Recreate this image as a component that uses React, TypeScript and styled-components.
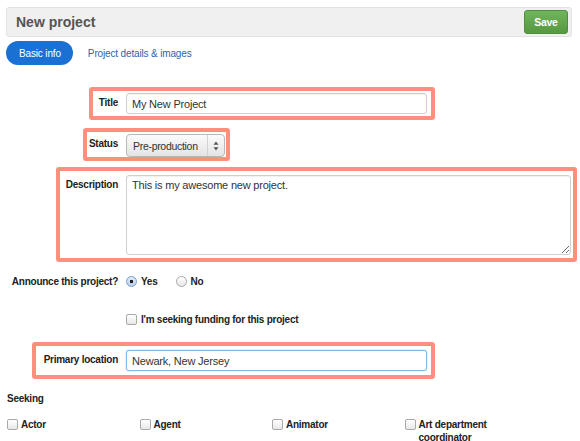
import React from "react";
import styled, { createGlobalStyle } from "styled-components";

const GlobalStyle = createGlobalStyle`
  body {
    margin: 0;
    background: #ffffff;
    font-family: "Liberation Sans", Arial, sans-serif;
    color: #222;
  }
`;

const Page = styled.div`
  width: 580px;
  height: 441px;
  overflow: hidden;
  padding-top: 7px;
  box-sizing: border-box;
`;

const Header = styled.div`
  margin: 0 8px 0 6px;
  height: 30px;
  box-sizing: border-box;
  background: #f0f0f0;
  border: 1px solid #e2e2e2;
  border-radius: 3px;
  display: flex;
  align-items: center;
  justify-content: space-between;
  padding: 0 3px 0 9px;
`;

const HeaderTitle = styled.h1`
  margin: 0;
  font-size: 14px;
  font-weight: bold;
  color: #555;
`;

const SaveButton = styled.button`
  width: 44px;
  height: 24px;
  border: 1px solid #4f8f3f;
  border-radius: 3px;
  background: linear-gradient(#70b45c, #56993f);
  color: #fff;
  font-family: inherit;
  font-size: 10.5px;
  font-weight: bold;
  letter-spacing: -0.3px;
  padding: 0;
`;

const Tabs = styled.div`
  display: flex;
  align-items: center;
  margin: 4px 0 0 6px;
  gap: 15px;
`;

const Tab = styled.a<{ $active?: boolean }>`
  height: 24px;
  display: flex;
  align-items: center;
  font-size: 10px;
  letter-spacing: -0.15px;
  text-decoration: none;
  border-radius: 12px;
  ${(p) =>
    p.$active
      ? `background: #1a71d3; color: #fff; padding: 0 12px 0 13px;`
      : `color: #2b65b3;`}
`;

const FieldRow = styled.div<{ $mt: number }>`
  position: relative;
  display: grid;
  grid-template-columns: 118px 1fr;
  column-gap: 8px;
  align-items: start;
  margin-top: ${(p) => p.$mt}px;
`;

const Label = styled.label<{ $pt?: number }>`
  text-align: right;
  font-size: 10px;
  font-weight: bold;
  letter-spacing: -0.25px;
  color: #222;
  padding-top: ${(p) => p.$pt ?? 4}px;
  white-space: nowrap;
`;

const TextInput = styled.input<{ $w: number; $focus?: boolean }>`
  width: ${(p) => p.$w}px;
  height: 21px;
  box-sizing: border-box;
  border: 1px solid ${(p) => (p.$focus ? "#86b6e8" : "#cfcfcf")};
  border-radius: 3px;
  box-shadow: ${(p) =>
    p.$focus ? "0 0 2px #a9cdf2" : "inset 0 1px 1px rgba(0,0,0,0.06)"};
  padding: 0 5px;
  font-family: inherit;
  font-size: 11px;
  letter-spacing: -0.2px;
  color: #333;
  outline: none;
`;

const SelectBox = styled.div`
  width: 99px;
  height: 23px;
  box-sizing: border-box;
  border: 1px solid #b9b9b9;
  border-radius: 4px;
  background: linear-gradient(#fbfbfb, #e4e4e4);
  display: flex;
  align-items: center;
  font-size: 10.5px;
  letter-spacing: -0.3px;
  color: #333;
`;

const SelectText = styled.span`
  flex: 1;
  padding-left: 6px;
  white-space: nowrap;
  overflow: hidden;
`;

const SelectArrows = styled.span`
  width: 16px;
  flex: none;
  height: 100%;
  border-left: 1px solid #d2d2d2;
  display: flex;
  align-items: center;
  justify-content: center;
`;

const TextArea = styled.textarea`
  width: 445px;
  height: 80px;
  box-sizing: border-box;
  border: 1px solid #d0d0d0;
  border-radius: 3px;
  box-shadow: inset 0 1px 1px rgba(0, 0, 0, 0.06);
  padding: 3px 5px;
  font-family: inherit;
  font-size: 11px;
  letter-spacing: -0.2px;
  color: #333;
  outline: none;
  resize: both;
`;

const Highlight = styled.div<{ $l: number; $t: number; $w: number; $h: number }>`
  position: absolute;
  left: ${(p) => p.$l}px;
  top: ${(p) => p.$t}px;
  width: ${(p) => p.$w}px;
  height: ${(p) => p.$h}px;
  box-sizing: border-box;
  border: 4px solid #fd8f7d;
  border-radius: 3px;
  pointer-events: none;
`;

const Options = styled.div`
  display: flex;
  align-items: center;
`;

const Choice = styled.span<{ $mr?: number }>`
  display: flex;
  align-items: center;
  gap: 4px;
  font-size: 10px;
  font-weight: bold;
  letter-spacing: -0.25px;
  margin-right: ${(p) => p.$mr ?? 0}px;
`;

const Radio = styled.span<{ $checked?: boolean }>`
  width: 11px;
  height: 11px;
  box-sizing: border-box;
  border-radius: 50%;
  border: 1px solid ${(p) => (p.$checked ? "#7d9cc4" : "#a9a9a9")};
  background: ${(p) =>
    p.$checked
      ? "radial-gradient(circle, #222 0 1.6px, transparent 2px), linear-gradient(#dfeaf8, #b9cfee)"
      : "linear-gradient(#ffffff, #e6e6e6)"};
  flex: none;
`;

const Box = styled.span`
  width: 11px;
  height: 11px;
  box-sizing: border-box;
  border-radius: 2px;
  border: 1px solid #aaa;
  background: linear-gradient(#ffffff, #e8e8e8);
  flex: none;
`;

const Heading = styled.div`
  margin: 22px 0 0 7px;
  font-size: 10px;
  font-weight: bold;
  letter-spacing: -0.25px;
`;

const CheckGrid = styled.div`
  display: grid;
  grid-template-columns: repeat(4, 132.5px);
  margin: 14px 0 0 7px;
`;

const CheckItem = styled.div`
  display: flex;
  align-items: flex-start;
  gap: 3px;
  font-size: 10px;
  font-weight: bold;
  letter-spacing: -0.25px;
  line-height: 13px;
  padding-right: 12px;
  ${Box} {
    margin-top: 1px;
  }
`;

const SelectIcon = () => (
  <svg width="6" height="10" viewBox="0 0 6 10">
    <path d="M3 0.5 L5.5 3.8 H0.5 Z" fill="#555" />
    <path d="M3 9.5 L5.5 6.2 H0.5 Z" fill="#555" />
  </svg>
);

const seeking = ["Actor", "Agent", "Animator", "Art department coordinator"];

export default function App() {
  return (
    <>
      <GlobalStyle />
      <Page>
        <Header>
          <HeaderTitle>New project</HeaderTitle>
          <SaveButton>Save</SaveButton>
        </Header>
        <Tabs>
          <Tab $active>Basic info</Tab>
          <Tab>Project details &amp; images</Tab>
        </Tabs>

        <FieldRow $mt={28}>
          <Label>Title</Label>
          <TextInput $w={301} defaultValue="My New Project" />
          <Highlight $l={89} $t={-6} $w={346} $h={33} />
        </FieldRow>

        <FieldRow $mt={20}>
          <Label>Status</Label>
          <SelectBox>
            <SelectText>Pre-production</SelectText>
            <SelectArrows>
              <SelectIcon />
            </SelectArrows>
          </SelectBox>
          <Highlight $l={83} $t={-6} $w={147} $h={33} />
        </FieldRow>

        <FieldRow $mt={18}>
          <Label>Description</Label>
          <TextArea defaultValue="This is my awesome new project." />
          <Highlight $l={56} $t={-8} $w={521} $h={95} />
        </FieldRow>

        <FieldRow $mt={21}>
          <Label $pt={0}>Announce this project?</Label>
          <Options>
            <Choice $mr={18}>
              <Radio $checked />
              Yes
            </Choice>
            <Choice>
              <Radio />
              No
            </Choice>
          </Options>
        </FieldRow>

        <FieldRow $mt={27}>
          <span />
          <Choice>
            <Box />
            I'm seeking funding for this project
          </Choice>
        </FieldRow>

        <FieldRow $mt={25}>
          <Label>Primary location</Label>
          <TextInput $w={301} $focus defaultValue="Newark, New Jersey" />
          <Highlight $l={32} $t={-8} $w={403} $h={37} />
        </FieldRow>

        <Heading>Seeking</Heading>
        <CheckGrid>
          {seeking.map((s) => (
            <CheckItem key={s}>
              <Box />
              <span>{s}</span>
            </CheckItem>
          ))}
        </CheckGrid>
      </Page>
    </>
  );
}
